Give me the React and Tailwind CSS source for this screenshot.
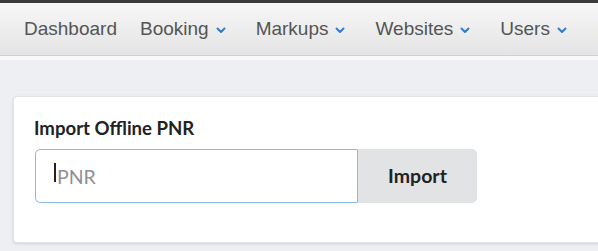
import { useState } from 'react';

function Chevron() {
  return (
    <svg width="10" height="7" viewBox="0 0 10 7" className="mt-[3px] mr-[7px]">
      <path d="M1.5 1.5l3.5 3.5 3.5-3.5" fill="none" stroke="#2f7cd6" strokeWidth="2" strokeLinecap="round" strokeLinejoin="round" />
    </svg>
  );
}

const navItems = [
  { label: 'Dashboard', menu: false },
  { label: 'Booking', menu: true },
  { label: 'Markups', menu: true },
  { label: 'Websites', menu: true },
  { label: 'Users', menu: true },
  { label: 'Reports', menu: true },
];

export default function App() {
  const [pnr, setPnr] = useState('');

  return (
    <div className="h-[251px] w-[598px] overflow-hidden bg-[#eeeff3] font-['Liberation_Sans',Arial,sans-serif]">
      {/* Top navigation */}
      <div className="h-[3px] bg-[#3b3b3b]" />
      <nav className="h-[53px] flex items-center pl-[24px] gap-[23px] whitespace-nowrap bg-gradient-to-b from-[#f7f7f7] to-[#e4e4e4] border-b border-[#cfcfcf] text-[19px] text-[#555]">
        {navItems.map(item => (
          <div key={item.label} className="flex items-center gap-[7px] shrink-0">
            <span>{item.label}</span>
            {item.menu && <Chevron />}
          </div>
        ))}
      </nav>
      <div className="h-[4px] bg-[#f8f8f9]" />

      {/* Import card */}
      <div className="mt-[36px] ml-[13px] w-[620px] bg-white border border-[#e1e2e6] rounded-[4px] shadow-[0_1px_3px_rgba(0,0,0,0.12)] pt-[20px] pl-[20px] pb-[39px] font-['Lato',sans-serif]">
        <h2 className="text-[18.6px] leading-[22px] font-bold text-[#222] mb-[10px]">Import Offline PNR</h2>
        <div className="flex ml-[1px]">
          <div className="relative">
            <input
              value={pnr}
              onChange={e => setPnr(e.target.value)}
              placeholder="PNR"
              className="w-[323px] h-[54px] pl-[21px] border border-[#8dbbe6] rounded-l-[5px] text-[19.5px] text-[#222] placeholder:text-[#8c9196] outline-none"
            />
            <span className="absolute left-[19px] top-[14px] w-[2px] h-[19px] bg-[#222]" />
          </div>
          <button className="w-[119px] h-[54px] bg-[#e2e3e5] rounded-r-[5px] text-[19.5px] font-bold text-[#222]">
            Import
          </button>
        </div>
      </div>
    </div>
  );
}
